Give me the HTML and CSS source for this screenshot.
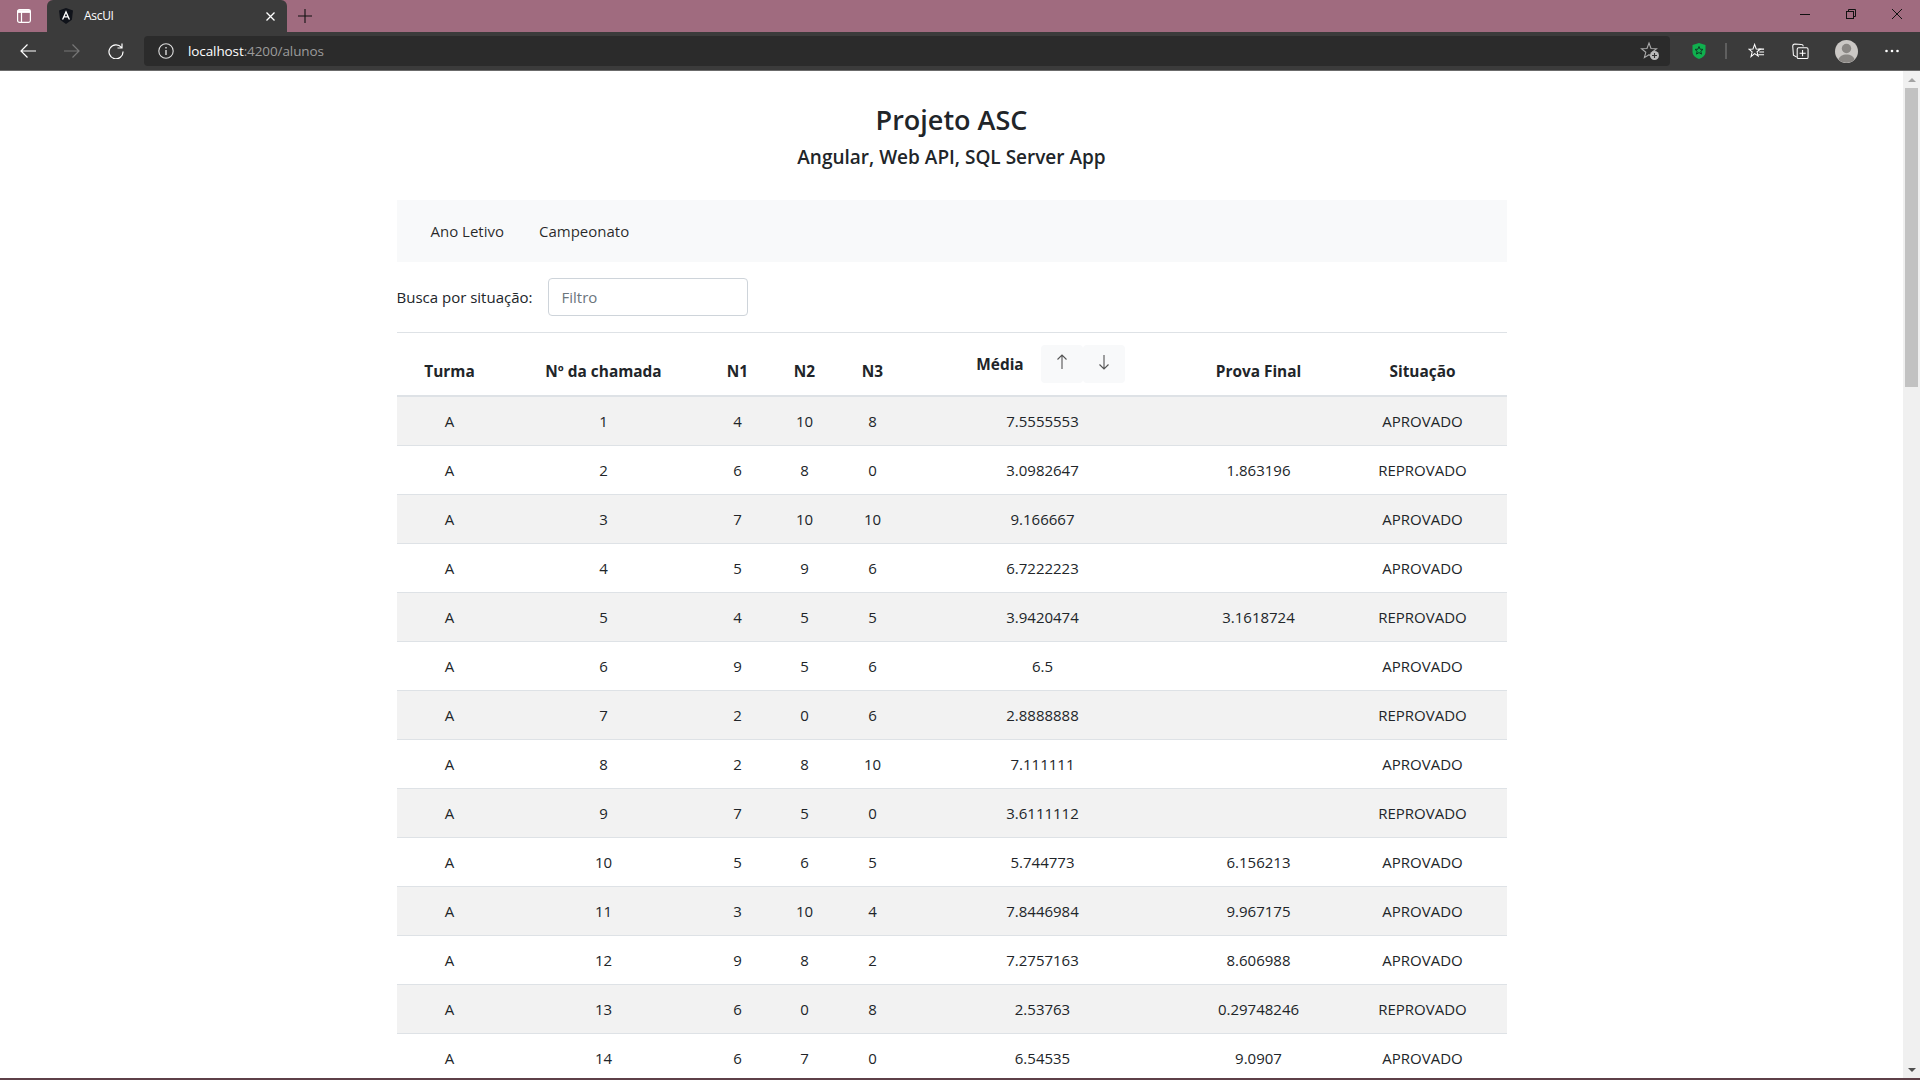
FILE: index.html
```html
<!DOCTYPE html>
<html lang="pt-BR">
<head>
  <meta charset="UTF-8" />
  <title>AscUI</title>
  <link rel="stylesheet" href="styles.css">
</head>
<body>
  <div class="browser">
    <div class="tabstrip">
      <div class="tab-actions">
        <svg width="14" height="14" viewBox="0 0 14 14" fill="none" stroke="#fff" stroke-width="1.2"><rect x=".6" y=".6" width="12.800" height="12.800" rx="1.800"/><path d="M.6 2.500h12.800" stroke-width="2.800"/><path d="M4.500 3v10.500"/></svg>
      </div>
      <div class="tab">
        <svg class="tab-logo" width="16" height="16" viewBox="0 0 16 16"><path d="M8 0 1 2.400l1.100 9.300L8 16l5.900-4.300L15 2.400z" fill="#10131a"/><path d="M8 2.300 3.900 11.600h1.500l.8-2.100h3.600l.8 2.100h1.500zm-1.200 6L8 5.400l1.200 2.900z" fill="#fff"/></svg>
        <span class="tab-title">AscUI</span>
        <svg class="tab-close" width="9" height="9" viewBox="0 0 9 9" stroke="#fff" stroke-width="1.300"><path d="M.5.500l8 8M8.500.500l-8 8"/></svg>
      </div>
      <svg class="tab-new" width="14" height="14" viewBox="0 0 14 14" stroke="#111" stroke-width="1.100"><path d="M7 0v14M0 7h14"/></svg>
      <div class="window-btns">
        <svg width="10" height="10" viewBox="0 0 10 10" stroke="#111" stroke-width="1"><path d="M0 5.500h10"/></svg>
        <svg width="10" height="10" viewBox="0 0 10 10" fill="none" stroke="#111" stroke-width="1"><rect x=".5" y="2.500" width="7" height="7"/><path d="M2.500 2.500v-2h7v7h-2"/></svg>
        <svg width="10" height="10" viewBox="0 0 10 10" stroke="#111" stroke-width="1"><path d="M0 0l10 10M10 0L0 10"/></svg>
      </div>
    </div>

    <div class="toolbar">
      <div class="nav-btns">
        <svg width="16" height="16" viewBox="0 0 16 16" fill="none" stroke="#fff" stroke-width="1.200"><path d="M16 8H1M7.500 1.500 1 8l6.500 6.500"/></svg>
        <svg width="16" height="16" viewBox="0 0 16 16" fill="none" stroke="#777" stroke-width="1.200"><path d="M0 8h15M8.500 1.500 15 8l-6.500 6.500"/></svg>
        <svg width="16" height="16" viewBox="0 0 16 16" fill="none" stroke="#fff" stroke-width="1.200"><path d="M13.500 4.500A7 7 0 1 0 15 8.500M14 .5v4.500H9.500"/></svg>
      </div>
      <div class="address">
        <svg width="16" height="16" viewBox="0 0 16 16" fill="none" stroke="#ddd" stroke-width="1.100"><circle cx="8" cy="8" r="7.200"/><path d="M8 7v5M8 4v1.500" stroke-width="1.400"/></svg>
        <span class="url"><span class="url-host">localhost</span>:4200/alunos</span>
        <svg class="star-add" width="20" height="20" viewBox="0 0 20 20"><path d="M9 2l2 5.500 5.500.3-4.300 3.500 1.400 5.300L9 13.700l-4.600 2.900 1.400-5.300L1.500 7.800 7 7.500z" fill="none" stroke="#aaa" stroke-width="1.100"/><circle cx="14.500" cy="14.500" r="4.500" fill="#bbb"/><path d="M14.500 12v5M12 14.500h5" stroke="#333" stroke-width="1.100"/></svg>
      </div>
      <div class="tool-icons">
        <svg class="ic-shield" width="14" height="16" viewBox="0 0 14 16"><path d="M7 0 13.500 2v7c0 3.500-3.500 6-6.500 7C4 15 .5 12.500.5 9V2z" fill="#10b04e"/><path d="M7 3.500l1.100 2.700 2.900.2-2.200 1.900.7 2.800L7 9.600l-2.500 1.500.7-2.800L3 6.400l2.900-.2z" fill="none" stroke="#0b3d26" stroke-width="1"/></svg>
        <span class="ic-sep"></span>
        <svg class="ic-fav" width="17" height="17" viewBox="0 0 18 18" fill="none" stroke="#fff" stroke-width="1.100"><path d="M7 1.500l1.700 4.800 4.300.2-3.400 2.800 1.200 4.500L7 11.300l-3.800 3.200 1.200-5L1 6.500l4.300-.2z"/><path d="M11 6.500h6M12 9.500h5M11 12.500h6"/></svg>
        <svg class="ic-coll" width="17" height="17" viewBox="0 0 18 18" fill="none" stroke="#fff" stroke-width="1.100"><path d="M5 15 1.500 13 .8 3.500C.8 2 1.800 1 3 1l7 .5c1 0 1.800.7 2 2"/><rect x="5.500" y="5" width="11.500" height="11.500" rx="1.500"/><path d="M11.200 7.500v6.500M8 10.800h6.500"/></svg>
        <svg class="ic-avatar" width="23" height="23" viewBox="0 0 23 23"><circle cx="11.500" cy="11.500" r="11.500" fill="#cbc8c5"/><circle cx="11.500" cy="8.500" r="4.700" fill="#8a8784"/><path d="M3.500 19.500c1-3.500 4-5 8-5s7 1.500 8 5a11.500 11.500 0 0 1-16 0z" fill="#8a8784"/></svg>
        <svg class="ic-more" width="14" height="4" viewBox="0 0 14 4" fill="#fff"><circle cx="1.500" cy="2" r="1.300"/><circle cx="7" cy="2" r="1.300"/><circle cx="12.500" cy="2" r="1.300"/></svg>
      </div>
    </div>

    <div class="viewport">
      <main class="page">
        <div class="container">
          <h3 class="title">Projeto ASC</h3>
          <h5 class="subtitle">Angular, Web API, SQL Server App</h5>

          <nav class="navbar">
            <a class="nav-link">Ano Letivo</a>
            <a class="nav-link">Campeonato</a>
          </nav>

          <div class="filter">
            <label class="filter-label">Busca por situação:</label>
            <input class="filter-input" type="text" placeholder="Filtro">
          </div>
          <hr class="divider">

          <table class="grades">
            <colgroup>
              <col class="c-turma"><col class="c-chamada"><col class="c-n"><col class="c-n2"><col class="c-n2"><col class="c-media"><col class="c-final"><col class="c-sit">
            </colgroup>
            <thead>
              <tr>
                <th>Turma</th>
                <th>Nº da chamada</th>
                <th>N1</th>
                <th>N2</th>
                <th>N3</th>
                <th class="th-media">
                  <div class="media-head">
                    <span class="media-label">Média</span>
                    <button class="sort-btn"><svg width="12" height="16" viewBox="0 0 12 16" fill="none" stroke="#555" stroke-width="1.100"><path d="M6 15V1M1.500 5.500 6 1l4.500 4.500"/></svg></button>
                    <button class="sort-btn"><svg width="12" height="16" viewBox="0 0 12 16" fill="none" stroke="#555" stroke-width="1.100"><path d="M6 1v14M1.500 10.500 6 15l4.500-4.500"/></svg></button>
                  </div>
                </th>
                <th>Prova Final</th>
                <th>Situação</th>
              </tr>
            </thead>
            <tbody>
              <tr><td>A</td><td>1</td><td>4</td><td>10</td><td>8</td><td>7.5555553</td><td></td><td>APROVADO</td></tr>
              <tr><td>A</td><td>2</td><td>6</td><td>8</td><td>0</td><td>3.0982647</td><td>1.863196</td><td>REPROVADO</td></tr>
              <tr><td>A</td><td>3</td><td>7</td><td>10</td><td>10</td><td>9.166667</td><td></td><td>APROVADO</td></tr>
              <tr><td>A</td><td>4</td><td>5</td><td>9</td><td>6</td><td>6.7222223</td><td></td><td>APROVADO</td></tr>
              <tr><td>A</td><td>5</td><td>4</td><td>5</td><td>5</td><td>3.9420474</td><td>3.1618724</td><td>REPROVADO</td></tr>
              <tr><td>A</td><td>6</td><td>9</td><td>5</td><td>6</td><td>6.5</td><td></td><td>APROVADO</td></tr>
              <tr><td>A</td><td>7</td><td>2</td><td>0</td><td>6</td><td>2.8888888</td><td></td><td>REPROVADO</td></tr>
              <tr><td>A</td><td>8</td><td>2</td><td>8</td><td>10</td><td>7.111111</td><td></td><td>APROVADO</td></tr>
              <tr><td>A</td><td>9</td><td>7</td><td>5</td><td>0</td><td>3.6111112</td><td></td><td>REPROVADO</td></tr>
              <tr><td>A</td><td>10</td><td>5</td><td>6</td><td>5</td><td>5.744773</td><td>6.156213</td><td>APROVADO</td></tr>
              <tr><td>A</td><td>11</td><td>3</td><td>10</td><td>4</td><td>7.8446984</td><td>9.967175</td><td>APROVADO</td></tr>
              <tr><td>A</td><td>12</td><td>9</td><td>8</td><td>2</td><td>7.2757163</td><td>8.606988</td><td>APROVADO</td></tr>
              <tr><td>A</td><td>13</td><td>6</td><td>0</td><td>8</td><td>2.53763</td><td>0.29748246</td><td>REPROVADO</td></tr>
              <tr><td>A</td><td>14</td><td>6</td><td>7</td><td>0</td><td>6.54535</td><td>9.0907</td><td>APROVADO</td></tr>
            </tbody>
          </table>
        </div>
      </main>
      <div class="scrollbar">
        <span class="arrow-up"></span>
        <div class="scroll-track"><div class="scroll-thumb"></div></div>
        <span class="arrow-down"></span>
      </div>
    </div>
    <div class="bottom-edge"></div>
  </div>
</body>
</html>
```

FILE: styles.css
```css
* {
  box-sizing: border-box;
}
html, body {
  margin: 0;
  padding: 0;
  height: 100%;
  overflow: hidden;
}
body {
  font-family: 'Open Sans', 'Noto Sans', sans-serif;
  font-size: 15px;
  line-height: 24px;
  color: #212529;
  background: #fff;
}

.browser {
  height: 1080px;
  display: flex;
  flex-direction: column;
}

/* tab strip */
.tabstrip {
  height: 32px;
  flex: none;
  background: #a06b7f;
  display: flex;
  align-items: center;
}
.tab-actions {
  width: 47px;
  height: 32px;
  display: flex;
  align-items: center;
  justify-content: center;
}
.tab {
  width: 240px;
  height: 32px;
  background: #3b3b3b;
  border-radius: 6px 6px 0 0;
  display: flex;
  align-items: center;
  padding: 0 12px 0 11px;
  color: #fff;
  font-size: 12px;
}
.tab-title {
  margin-left: 10px;
  flex: 1;
  letter-spacing: -0.3px;
}
.tab-new {
  margin-left: 11px;
}
.window-btns {
  margin-left: auto;
  height: 32px;
  display: flex;
  align-items: center;
  gap: 36px;
  padding: 0 18px 4px 0;
}

/* toolbar */
.toolbar {
  height: 39px;
  flex: none;
  background: #3b3b3b;
  border-bottom: 1px solid #6b6b6b;
  display: flex;
  align-items: center;
}
.nav-btns {
  width: 144px;
  display: flex;
  gap: 28px;
  padding-left: 20px;
  flex: none;
}
.address {
  width: 1526px;
  height: 30px;
  flex: none;
  background: #2b2b2b;
  border-radius: 4px;
  display: flex;
  align-items: center;
  padding: 0 10px 0 14px;
  font-size: 13.5px;
  color: #9b9b9b;
}
.url {
  margin-left: 14px;
  flex: 1;
  letter-spacing: -0.1px;
}
.url-host {
  color: #fff;
}
.tool-icons {
  flex: 1;
  display: flex;
  align-items: center;
}
.ic-shield { margin-left: 22px; }
.ic-sep {
  width: 2px;
  height: 16px;
  background: #5f5f5f;
  margin-left: 19px;
}
.ic-fav { margin-left: 21px; }
.ic-coll { margin-left: 27px; }
.ic-avatar { margin-left: 26px; }
.ic-more { margin-left: 27px; }

/* page */
.viewport {
  flex: 1;
  display: flex;
  min-height: 0;
}
.page {
  flex: 1;
  overflow: hidden;
}
.container {
  width: 1110px;
  margin: 0 auto;
}
.title {
  margin: 0;
  padding-top: 30px;
  text-align: center;
  font-size: 27px;
  line-height: 38px;
  font-weight: 600;
}
.subtitle {
  margin: 0;
  padding-top: 6px;
  text-align: center;
  font-size: 19px;
  line-height: 24px;
  font-weight: 600;
}
.navbar {
  margin-top: 31px;
  height: 62px;
  background: #f8f9fa;
  display: flex;
  align-items: center;
  padding-left: 34px;
  gap: 35px;
}
.nav-link {
  color: rgba(0, 0, 0, 0.85);
}
.filter {
  margin-top: 16px;
  display: flex;
  align-items: center;
}
.filter-input {
  width: 200px;
  height: 38px;
  margin-left: 16px;
  padding: 6px 12px;
  border: 1px solid #ced4da;
  border-radius: 4px;
  font: inherit;
  color: #495057;
}
.filter-input::placeholder {
  color: #6c757d;
}
.divider {
  margin: 16px 0 0;
  border: 0;
  border-top: 1px solid #dee2e6;
}

/* table */
.grades {
  width: 100%;
  table-layout: fixed;
  border-collapse: collapse;
  text-align: center;
}
.c-turma { width: 106px; }
.c-chamada { width: 202px; }
.c-n { width: 66px; }
.c-n2 { width: 68px; }
.c-media { width: 272px; }
.c-final { width: 160px; }
.c-sit { width: 168px; }
.grades th {
  padding: 13px 12px 11px;
  vertical-align: bottom;
  border-bottom: 2px solid #dee2e6;
  font-size: 15.4px;
  font-weight: 700;
}
.grades .th-media {
  padding: 12px;
}
.grades td {
  padding: 12px;
  border-bottom: 1px solid #dee2e6;
}
.grades tbody tr:nth-child(odd) {
  background: #f2f2f2;
}
.media-head {
  display: flex;
  align-items: center;
  justify-content: center;
  padding-left: 16px;
}
.media-label {
  margin-right: 17px;
  padding-top: 2px;
}
.sort-btn {
  width: 42px;
  height: 38px;
  border: 0;
  border-radius: 4px;
  background: #f8f9fa;
  padding: 0 0 4px;
  display: flex;
  align-items: center;
  justify-content: center;
}

/* scrollbar */
.scrollbar {
  width: 17px;
  flex: none;
  background: #f0f0f0;
  display: flex;
  flex-direction: column;
  align-items: center;
}
.arrow-up, .arrow-down {
  flex: none;
  width: 0;
  height: 0;
  border-left: 4px solid transparent;
  border-right: 4px solid transparent;
}
.arrow-up {
  margin-top: 7px;
  border-bottom: 4px solid #a3a3a3;
}
.arrow-down {
  margin-bottom: 6px;
  border-top: 4px solid #505050;
}
.scroll-track {
  flex: 1;
  width: 100%;
  padding: 6px 2px 0;
}
.scroll-thumb {
  height: 299px;
  background: #c2c2c2;
}
.bottom-edge {
  height: 2px;
  flex: none;
  background: #5e4048;
}
```
